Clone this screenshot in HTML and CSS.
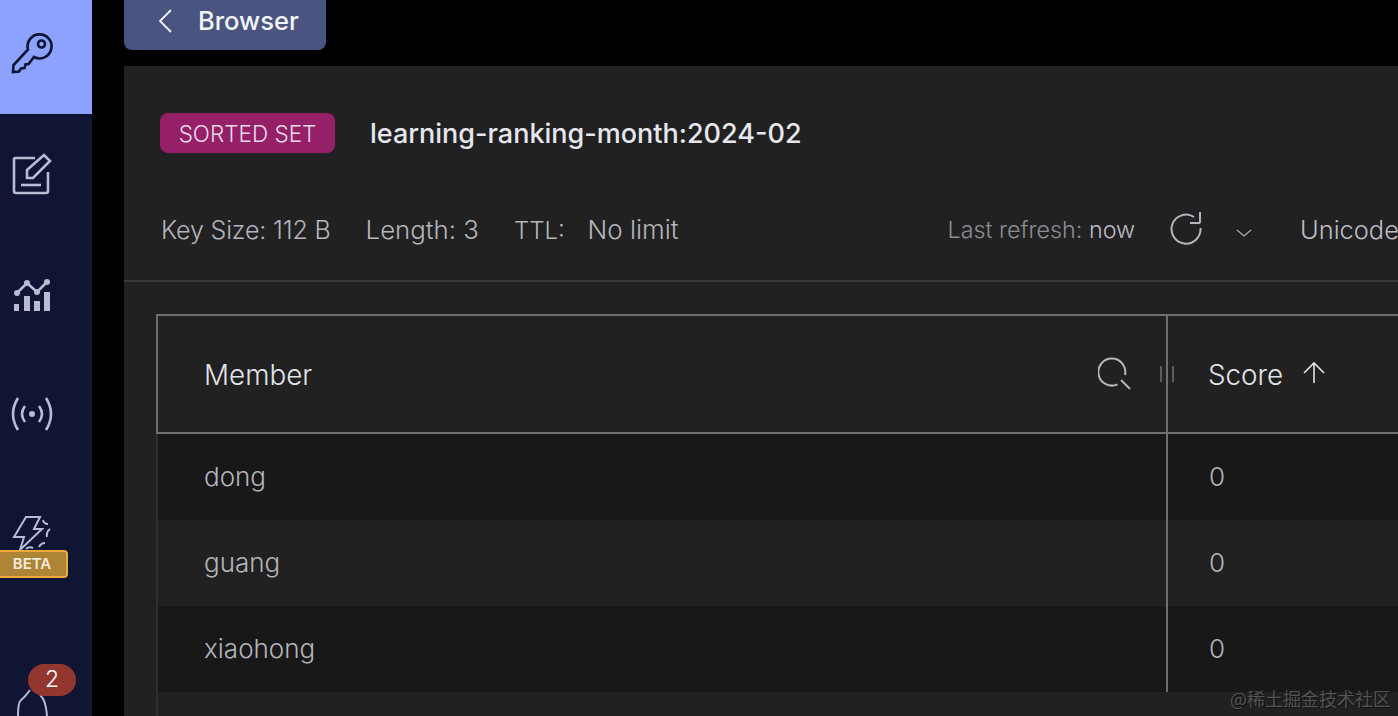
FILE: index.html
```html
<!DOCTYPE html>
<html lang="en">
<head>
  <meta charset="UTF-8" />
  <meta name="viewport" content="width=device-width, initial-scale=1.0" />
  <title>Browser</title>
  <link rel="stylesheet" href="styles.css">
</head>
<body>
  <nav class="sidebar">
    <div class="nav-item active">
      <svg class="nav-icon" viewBox="0 0 48 48"><path d="M20 18.5 L5.5 34 L5 41 L11 40.5 L13 37.5 L16.5 37 L17.5 33.5 L20.5 33 L26 26 A12 12 0 1 0 20 18.5 Z"/><circle cx="33.5" cy="13" r="3.5"/></svg>
    </div>
    <div class="nav-item">
      <svg class="nav-icon" viewBox="0 0 48 48"><path d="M27 8 H7 Q6 8 6 10 V41 Q6 43 8 43 H38 Q40 43 40 41 V22"/><path d="M13 35 H33"/><path d="M19 20 L36 5 L42 11 L25 28 H19 Z"/></svg>
    </div>
    <div class="nav-item">
      <svg class="nav-icon" viewBox="0 0 48 48"><path d="M9 23 L19 13 L29 22 L39 12"/><circle class="fill" cx="9" cy="23" r="3"/><circle class="fill" cx="19" cy="13" r="3"/><circle class="fill" cx="29" cy="22" r="3"/><circle class="fill" cx="39" cy="12" r="3"/><rect class="fill" x="6" y="34" width="5" height="7"/><rect class="fill" x="16" y="26" width="6" height="15"/><rect class="fill" x="26" y="31" width="6" height="10"/><rect class="fill" x="36" y="22" width="6" height="19"/></svg>
    </div>
    <div class="nav-item">
      <svg class="nav-icon" viewBox="0 0 48 48"><path d="M10 8 Q0 24 10 40"/><path d="M38 8 Q48 24 38 40"/><path d="M17 16 Q11 24 17 32"/><path d="M31 16 Q37 24 31 32"/><circle class="fill" cx="24" cy="24" r="3"/></svg>
    </div>
    <div class="nav-item">
      <svg class="nav-icon thin" viewBox="0 0 48 48"><path d="M18 7 H32 L26 19 H34 L12 40 L16 27 H6 Z"/><path d="M35 10 Q36 14 40 14"/><path d="M42 19 Q38 22 39 27"/><path d="M37 33 Q33 33 31 37"/><path d="M25 38 Q21 36 18 39"/></svg>
      <span class="beta">BETA</span>
    </div>
    <div class="nav-item last">
      <svg class="nav-icon thin" viewBox="0 0 48 48"><path d="M10 36 Q10 22 13 20 Q17 17 22 10"/><path d="M39 36 Q38 20 32 15"/></svg>
      <span class="count">2</span>
    </div>
  </nav>

  <main class="content">
    <a class="back-btn">
      <svg class="back-icon" viewBox="0 0 16 24"><path d="M13 1 L2 12 L13 23"/></svg>
      <span>Browser</span>
    </a>

    <section class="panel">
      <div class="key-title">
        <span class="type-badge">SORTED SET</span>
        <span class="key-name">learning-ranking-month:2024-02</span>
      </div>

      <div class="key-meta">
        <span class="key-size">Key Size: 112 B</span>
        <span class="key-length">Length: 3</span>
        <span class="ttl">TTL: <span>No limit</span></span>
        <div class="meta-right">
          <span class="refresh-text">Last refresh: <b>now</b></span>
          <svg class="refresh-icon" viewBox="0 0 34 36"><path d="M25 6 A14.5 14.5 0 1 0 31.5 17"/><path d="M31 1 V11 Q31 12 30 12 H21"/></svg>
          <svg class="caret-icon" viewBox="0 0 16 10"><path d="M1 2 L8 8 L15 2"/></svg>
          <span class="format">Unicode</span>
        </div>
      </div>

      <div class="table">
        <div class="table-head">
          <div class="cell member-head">
            <span>Member</span>
            <svg class="search-icon" viewBox="0 0 34 34"><path d="M19.5 27.3 A13.5 13.5 0 1 1 27 18"/><path d="M23 23 L32 32"/></svg>
            <span class="resize"></span>
          </div>
          <div class="cell">
            <span>Score</span>
            <svg class="sort-icon" viewBox="0 0 24 24"><path d="M12 22 V3 M2 12 L12 2 L22 12"/></svg>
          </div>
        </div>
        <div class="table-row">
          <div class="cell">dong</div>
          <div class="cell">0</div>
        </div>
        <div class="table-row alt">
          <div class="cell">guang</div>
          <div class="cell">0</div>
        </div>
        <div class="table-row">
          <div class="cell">xiaohong</div>
          <div class="cell">0</div>
        </div>
      </div>
    </section>
  </main>

  <div class="watermark">@稀土掘金技术社区</div>
</body>
</html>
```

FILE: styles.css
```css
html, body {
  height: 100%;
}
body {
  margin: 0;
  height: 716px;
  display: flex;
  overflow: hidden;
  background: #000;
  color: #dfe0e8;
  font-family: Inter, "Liberation Sans", sans-serif;
}

/* sidebar */
.sidebar {
  width: 92px;
  flex-shrink: 0;
  background: #0f1533;
}
.nav-item {
  position: relative;
  height: 120px;
  display: flex;
  align-items: center;
  padding-left: 8px;
}
.nav-item.active {
  height: 114px;
  background: #8ba2ff;
}
.nav-item.active .nav-icon {
  stroke: #0f1533;
  margin-top: -4px;
}
.nav-item.last {
  height: 122px;
  align-items: flex-start;
}
.nav-item.last .nav-icon {
  margin-top: 86px;
}
.nav-icon {
  width: 48px;
  height: 48px;
  fill: none;
  stroke: #b7bed3;
  stroke-width: 2.6;
}
.nav-icon.thin {
  stroke-width: 2;
}
.nav-icon .fill {
  fill: #b7bed3;
  stroke: none;
}
.beta {
  position: absolute;
  left: -4px;
  top: 76px;
  width: 68px;
  height: 24px;
  border: 2px solid #f0a73f;
  border-radius: 4px;
  background: #ae8435;
  color: #f2ecdd;
  font-size: 15px;
  font-weight: 600;
  line-height: 24px;
  text-align: center;
}
.count {
  position: absolute;
  left: 28px;
  top: 70px;
  width: 48px;
  height: 32px;
  border-radius: 16px;
  background: #93372e;
  color: #fff;
  font-size: 23px;
  font-weight: 300;
  line-height: 31px;
  text-align: center;
}

/* main */
.content {
  flex: 1;
  min-width: 0;
  margin-left: 32px;
}
.back-btn {
  width: 202px;
  height: 50px;
  display: flex;
  align-items: center;
  box-sizing: border-box;
  padding: 0 0 9px 34px;
  background: #4a5480;
  border-radius: 0 0 8px 8px;
  color: #f3f4f8;
  font-size: 25.5px;
  font-weight: 500;
}
.back-icon {
  width: 16px;
  height: 24px;
  margin-right: 24px;
  fill: none;
  stroke: #f3f4f8;
  stroke-width: 1.8;
}
.panel {
  margin-top: 16px;
  height: 650px;
  background: #212121;
  overflow: hidden;
}
.key-title {
  height: 40px;
  margin: 47px 0 0 36px;
  display: flex;
  align-items: center;
}
.type-badge {
  width: 175px;
  height: 40px;
  border-radius: 8px;
  background: #962067;
  color: #e4dce8;
  font-size: 22.5px;
  font-weight: 300;
  line-height: 41px;
  text-align: center;
}
.key-name {
  margin-left: 35px;
  color: #e6e7ee;
  font-size: 27px;
  font-weight: 500;
}
.key-meta {
  height: 129px;
  padding: 26px 0 0 37px;
  display: flex;
  align-items: center;
  gap: 35px;
  border-bottom: 2px solid #3a3a3a;
  box-sizing: border-box;
  color: #b4b5bd;
  font-size: 26px;
  font-weight: 300;
  white-space: nowrap;
  overflow: hidden;
}
.key-size {
  font-size: 25px;
  letter-spacing: -0.15px;
}
.key-length {
  font-size: 25.8px;
}
.ttl {
  font-size: 24px;
}
.ttl span {
  margin-left: 16px;
  font-size: 26px;
}
.meta-right {
  display: flex;
  align-items: center;
  margin-left: 234px;
}
.refresh-text {
  color: #8c8d94;
  font-size: 23.3px;
}
.refresh-text b {
  color: #bcbdc5;
  font-weight: 300;
}
.refresh-icon {
  width: 34px;
  height: 36px;
  margin: -2px 0 0 34px;
  fill: none;
  stroke: #b5b6be;
  stroke-width: 2;
}
.caret-icon {
  width: 16px;
  height: 10px;
  margin: 6px 0 0 33px;
  fill: none;
  stroke: #a9aab2;
  stroke-width: 1.3;
}
.format {
  margin-left: 48px;
  color: #bcbdc5;
  font-size: 25.4px;
}

/* table */
.table {
  margin: 32px 0 0 32px;
  width: 1300px;
  border-left: 2px solid #2e2e2e;
  height: 402px;
}
.table-head, .table-row {
  display: grid;
  grid-template-columns: 1008px 1fr;
}
.table-head {
  height: 120px;
  box-sizing: border-box;
  border-top: 2px solid #6f6f6f;
  border-bottom: 2px solid #6f6f6f;
  border-left: 2px solid #6f6f6f;
  margin-left: -2px;
  color: #e2e3ea;
  font-size: 27.8px;
  font-weight: 300;
}
.member-head {
  position: relative;
}
.table-row {
  height: 86px;
  background: #181818;
  color: #b4b5bd;
  font-size: 26px;
  font-weight: 300;
}
.table-row .cell {
  padding-bottom: 2px;
}
.table-row.alt {
  background: #212121;
}
.cell {
  display: flex;
  align-items: center;
  padding-left: 46px;
  box-sizing: border-box;
}
.table-head .cell {
  padding-top: 2px;
}
.cell + .cell {
  border-left: 2px solid #6f6f6f;
  padding-left: 40px;
}
.table-row .cell + .cell {
  padding-left: 41px;
}
.search-icon {
  position: absolute;
  left: 940px;
  top: 41px;
  width: 34px;
  height: 34px;
  fill: none;
  stroke: #b5b6be;
  stroke-width: 2;
}
.resize {
  position: absolute;
  left: 1002px;
  top: 50px;
  width: 14px;
  height: 16px;
  box-sizing: border-box;
  border-left: 2px solid #5c5c60;
  border-right: 2px solid #5c5c60;
}
.sort-icon {
  width: 24px;
  height: 24px;
  margin: -4px 0 0 19px;
  fill: none;
  stroke: #e2e3ea;
  stroke-width: 1.6;
}
.watermark {
  position: absolute;
  right: 7px;
  top: 685px;
  color: rgba(255, 255, 255, 0.26);
  font-family: "Noto Sans CJK SC", sans-serif;
  font-size: 18px;
  text-shadow: 1px 1px 1px rgba(0, 0, 0, 0.5);
}
```
